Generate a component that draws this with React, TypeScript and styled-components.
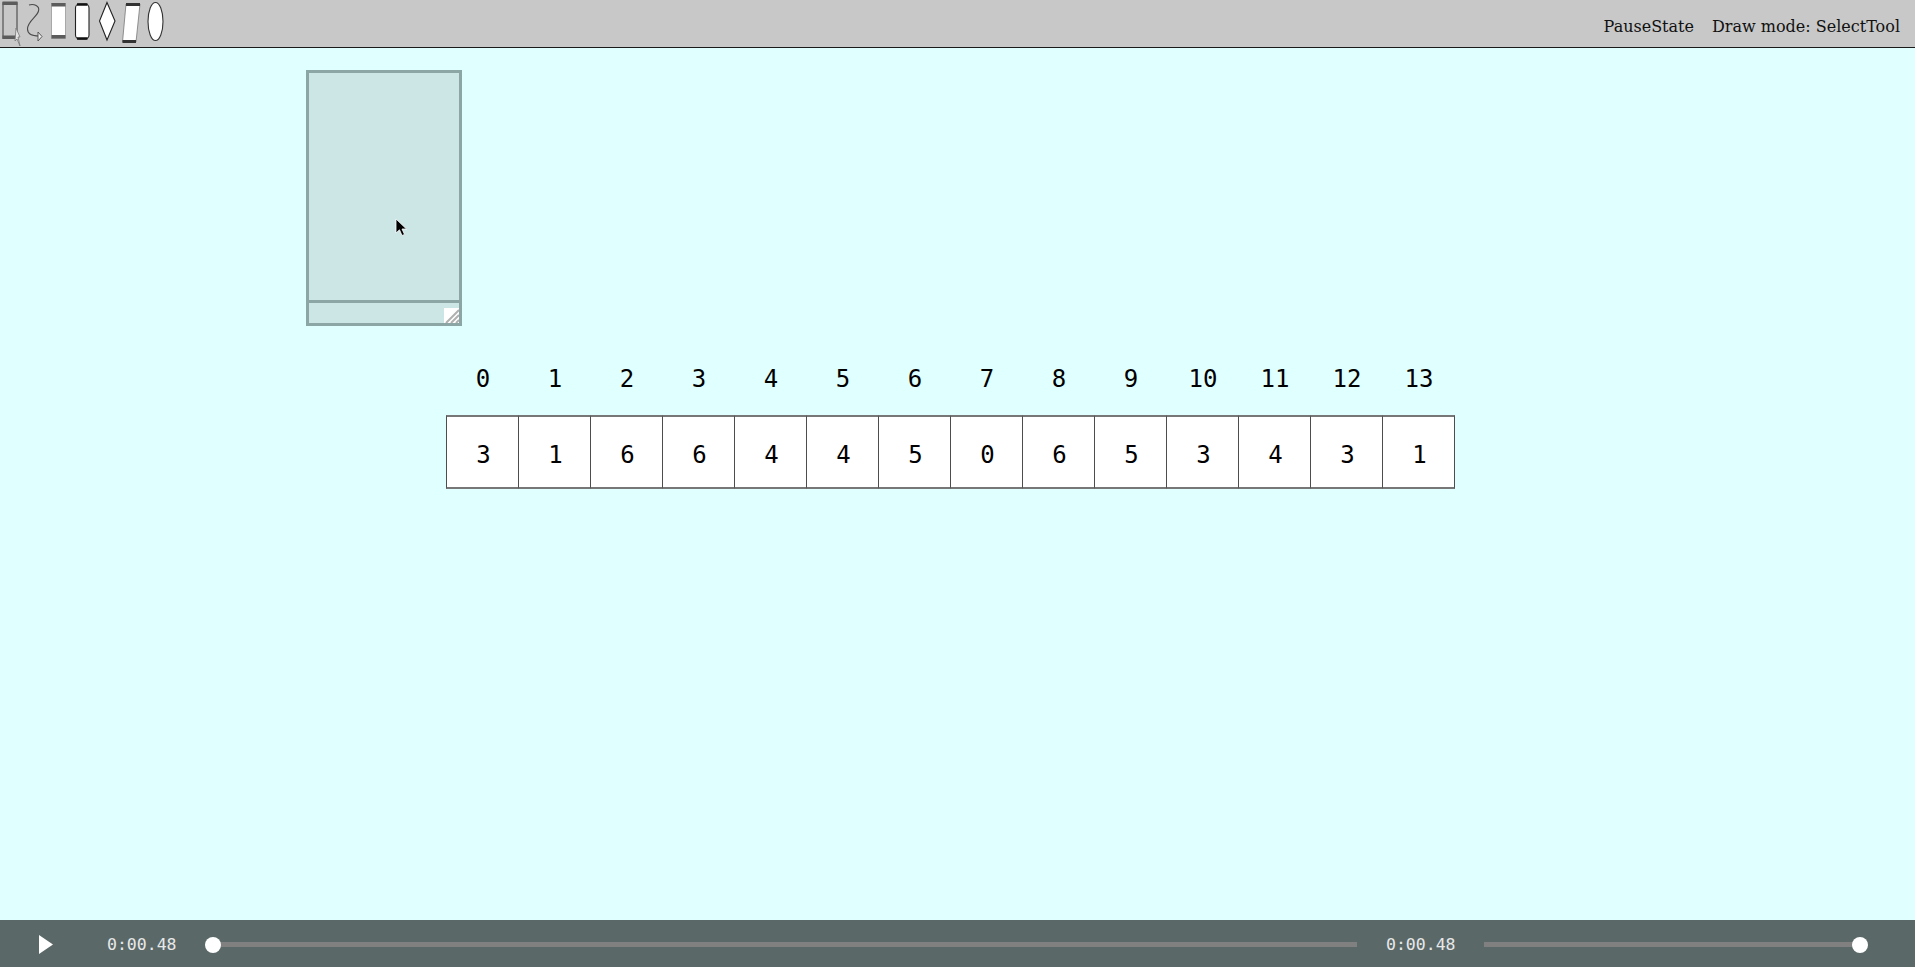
import React from 'react';
import styled, { createGlobalStyle } from 'styled-components';

const GlobalStyle = createGlobalStyle`
  html,
  body {
    margin: 0;
    padding: 0;
    height: 100%;
    overflow: hidden;
  }
`;

const Page = styled.div`
  width: 100%;
  height: 100vh;
  display: flex;
  flex-direction: column;
  background-color: #e0ffff;
`;

const Header = styled.header`
  height: 47px;
  flex: none;
  display: flex;
  justify-content: space-between;
  align-items: center;
  background-color: #c8c8c8;
  border-bottom: 1px solid #1a1a1a;
`;

const ToolIcons = styled.svg`
  width: 170px;
  height: 47px;
  display: block;
  filter: blur(0.4px);
`;

const Status = styled.div`
  display: flex;
  gap: 18px;
  padding-right: 15px;
  padding-top: 6px;
  font: 16px 'DejaVu Serif', serif;
  color: #111;
`;

const Canvas = styled.main`
  flex: 1;
  min-height: 0;
  display: flex;
  flex-direction: column;
  padding-top: 22px;
`;

const Panel = styled.div`
  position: relative;
  box-sizing: border-box;
  width: 156px;
  height: 256px;
  margin-left: 306px;
  display: flex;
  flex-direction: column;
  background-color: #cce5e5;
  border: 3px solid #8ca5a5;
`;

const PanelBody = styled.div`
  flex: 1;
  border-bottom: 3px solid #8ca5a5;
`;

const PanelFoot = styled.div`
  box-sizing: border-box;
  height: 20px;
  flex: none;
  display: flex;
  justify-content: flex-end;
  align-items: flex-start;
  padding-top: 5px;
`;

const ResizeHandle = styled.svg`
  width: 15px;
  height: 15px;
  display: block;
`;

const Cursor = styled.svg`
  position: absolute;
  left: 86px;
  top: 145px;
  width: 13px;
  height: 19px;
`;

const ArrayGrid = styled.div`
  display: grid;
  grid-template-columns: repeat(14, 72px);
  margin: 0 0 0 446px;
  font: 24px 'DejaVu Sans Mono', monospace;
  color: #000;
`;

const IndexLabel = styled.div`
  height: 89px;
  padding: 30px 0 0 2px;
  box-sizing: border-box;
  display: flex;
  align-items: flex-start;
  justify-content: center;
  line-height: 46px;
`;

const Cell = styled.div`
  box-sizing: border-box;
  height: 74px;
  width: 73px;
  margin-right: -1px;
  display: flex;
  align-items: center;
  justify-content: center;
  background-color: #fff;
  border-style: solid;
  border-color: #777;
  border-width: 2px 1px;
  border-left-color: #4d4d4d;
  border-right-color: #4d4d4d;
  padding: 6px 0 0 2px;
`;

const Controls = styled.footer`
  box-sizing: border-box;
  height: 47px;
  flex: none;
  display: flex;
  align-items: center;
  padding-top: 2px;
  background-color: #5a6868;
`;

const PlayButton = styled.svg`
  width: 14px;
  height: 19px;
  margin-left: 39px;
  flex: none;
`;

const Time = styled.span<{ $gap: number }>`
  width: 70px;
  margin-left: ${({ $gap }) => $gap}px;
  flex: none;
  font: 16.5px 'DejaVu Sans Mono', monospace;
  color: #e8e8e8;
`;

const Track = styled.div<{ $width: number; $gap: number }>`
  position: relative;
  flex: none;
  width: ${({ $width }) => $width}px;
  height: 5px;
  margin-left: ${({ $gap }) => $gap}px;
  background-color: #808080;
`;

const Thumb = styled.div<{ $end?: boolean }>`
  position: absolute;
  top: -5.5px;
  width: 16px;
  height: 16px;
  border-radius: 50%;
  background-color: #fff;
  ${({ $end }) => ($end ? 'right: -8px;' : 'left: -8px;')}
`;

const indices = Array.from({ length: 14 }, (_, i) => i);
const values = [3, 1, 6, 6, 4, 4, 5, 0, 6, 5, 3, 4, 3, 1];

// toolbar sprites, the original ones are small scaled bitmaps
function ToolbarSprites() {
  return (
    <ToolIcons viewBox="0 0 170 47">
      <rect x="3" y="3" width="14" height="35" fill="none" stroke="#6a6a6a" strokeWidth="1.5" />
      <rect x="2.5" y="1.5" width="15" height="3.5" fill="#5c5c5c" />
      <rect x="2.5" y="35.5" width="15" height="3.5" fill="#5c5c5c" />
      <path d="M16 28 L20 37 L18 37 L20 46 L17 39 L15 41 Z" fill="#e4e4e4" stroke="#777" strokeWidth="0.8" />
      <path d="M29 5 C34 3.5 40 6 38.5 11 C37 17 27.5 21 27.5 29 C27.5 35 33 36 39 36" fill="none" stroke="#4a4a4a" strokeWidth="1.1" />
      <path d="M38 32 L42 36.5 L38 41 Z" fill="#eee" stroke="#4a4a4a" strokeWidth="0.9" />
      <rect x="51.5" y="3.5" width="14" height="35" fill="#fff" stroke="#999" strokeWidth="0.8" />
      <rect x="51.5" y="3" width="14" height="3.5" fill="#5c5c5c" />
      <rect x="51.5" y="35" width="14" height="3.5" fill="#5c5c5c" />
      <rect x="75.5" y="4" width="13.5" height="35" rx="4" fill="#fff" stroke="#222" strokeWidth="1.1" />
      <path d="M77 4.5 H87.5 M77 38.5 H87.5" stroke="#111" strokeWidth="2.4" />
      <path d="M107 2.5 L115 21 L107 40 L99.5 21 Z" fill="#fff" stroke="#222" strokeWidth="1.1" />
      <path d="M126 4 H140 L136 42 H122.5 Z" fill="#fff" stroke="#777" strokeWidth="0.8" />
      <path d="M126 4.5 H140 M122.5 41.5 H136" stroke="#333" strokeWidth="3" />
      <ellipse cx="155.5" cy="21.5" rx="7.5" ry="19" fill="#fff" stroke="#333" strokeWidth="1.1" />
    </ToolIcons>
  );
}

export default function App() {
  return (
    <Page>
      <GlobalStyle />
      <Header>
        <ToolbarSprites />
        <Status>
          <span>PauseState</span>
          <span>Draw mode: SelectTool</span>
        </Status>
      </Header>
      <Canvas>
        <Panel>
          <PanelBody />
          <PanelFoot>
            <ResizeHandle viewBox="0 0 15 15">
              <rect width="15" height="15" fill="#fff" />
              <path d="M15 2 L2 15 M15 7 L7 15 M15 12 L12 15" stroke="#b0b0b0" strokeWidth="2" />
            </ResizeHandle>
          </PanelFoot>
          <Cursor viewBox="0 0 13 19">
            <path d="M1 1 V15 L4.5 11.8 L7 17.5 L9.5 16.4 L7 11 H11.5 Z" fill="#000" stroke="#fff" strokeWidth="0.8" />
          </Cursor>
        </Panel>
        <ArrayGrid>
          {indices.map((i) => (
            <IndexLabel key={i}>{i}</IndexLabel>
          ))}
          {values.map((v, i) => (
            <Cell key={i}>{v}</Cell>
          ))}
        </ArrayGrid>
      </Canvas>
      <Controls>
        <PlayButton viewBox="0 0 14 19">
          <path d="M0 0 L14 9.5 L0 19 Z" fill="#fff" />
        </PlayButton>
        <Time $gap={54}>0:00.48</Time>
        <Track $width={1144} $gap={36}>
          <Thumb />
        </Track>
        <Time $gap={29}>0:00.48</Time>
        <Track $width={376} $gap={28}>
          <Thumb $end />
        </Track>
      </Controls>
    </Page>
  );
}
